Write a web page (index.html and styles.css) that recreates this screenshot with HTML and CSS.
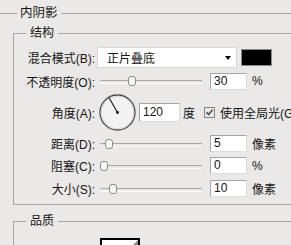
FILE: index.html
```html
<!DOCTYPE html>
<html>
<head>
<meta charset="utf-8">
<link rel="stylesheet" href="styles.css">
</head>
<body>
<fieldset class="outer">
  <legend class="outer-legend">内阴影</legend>
  <fieldset class="group structure">
    <legend class="group-legend">结构</legend>
    <div class="row r1">
      <span class="label">混合模式(B):</span>
      <div class="select"><span class="select-text">正片叠底</span><span class="arrow"></span></div>
      <div class="swatch"></div>
    </div>
    <div class="row r2">
      <span class="label">不透明度(O):</span>
      <div class="slider"><span class="thumb" style="left:28px"></span></div>
      <div class="field">30</div><span class="unit">%</span>
    </div>
    <div class="row r3">
      <span class="label">角度(A):</span>
      <div class="dial">
        <svg width="37" height="37" viewBox="0 0 37 37">
          <circle cx="18.5" cy="18.5" r="17.5" fill="#f3f3f3" stroke="#4a4a4a" stroke-width="1.3"/>
          <circle cx="18.5" cy="18.5" r="16.3" fill="none" stroke="#d6d6d6" stroke-width="1"/>
          <line x1="18.5" y1="18.5" x2="10.3" y2="4.3" stroke="#111" stroke-width="1.1"/>
          <circle cx="18.5" cy="18.5" r="1.4" fill="#111"/>
        </svg>
      </div>
      <div class="field wide">120</div><span class="unit deg">度</span>
      <span class="check">
        <svg width="9" height="9" viewBox="0 0 9 9"><path d="M1.5 4.2 L3.6 6.5 L7.6 1.8" fill="none" stroke="#4c4c54" stroke-width="1.6"/></svg>
      </span>
      <span class="check-label">使用全局光(G)</span>
    </div>
    <div class="row r4">
      <span class="label">距离(D):</span>
      <div class="slider"><span class="thumb" style="left:5px"></span></div>
      <div class="field">5</div><span class="unit">像素</span>
    </div>
    <div class="row r5">
      <span class="label">阻塞(C):</span>
      <div class="slider"><span class="thumb" style="left:0px"></span></div>
      <div class="field">0</div><span class="unit">%</span>
    </div>
    <div class="row r6">
      <span class="label">大小(S):</span>
      <div class="slider"><span class="thumb" style="left:9px"></span></div>
      <div class="field">10</div><span class="unit">像素</span>
    </div>
  </fieldset>
  <fieldset class="group quality">
    <legend class="group-legend">品质</legend>
    <div class="row q1">
      <span class="label low">等高线:</span>
      <div class="contour">
        <svg width="36" height="36" viewBox="0 0 36 36"><polygon points="0,36 36,0 36,36" fill="#8c8c8c"/></svg>
      </div>
      <span class="check low2"></span>
      <span class="check-label low">消除锯齿(L)</span>
    </div>
  </fieldset>
</fieldset>
</body>
</html>
```

FILE: styles.css
```css
* { box-sizing: border-box; }
html, body { margin: 0; padding: 0; }
body {
  background: #ebe9e8;
  width: 291px;
  height: 245px;
  overflow: hidden;
  font-family: "Liberation Sans", "Noto Sans CJK SC", sans-serif;
  font-size: 12px;
  color: #141414;
}
fieldset { margin: 0; min-width: 0; }
legend { line-height: 16px; height: 16px; }

.outer {
  margin: 5px 0 0 -2px;
  width: 340px;
  border: 1px solid #a8a6a4;
  padding: 0 0 0 14px;
}
.outer-legend {
  margin-left: 4px;
  padding: 0 3px;
  font-size: 12.5px;
}
.group {
  width: 320px;
  border: 1px solid #a8a6a4;
  padding: 4px 0 4px 0;
}
.structure { margin-top: 4px; }
.group-legend {
  margin-left: 12px;
  padding: 0 4px;
}

.row { display: flex; align-items: center; }
.r1 { height: 25px; }
.r2 { height: 22px; }
.r3 { height: 41px; }
.r4 { height: 21px; }
.r5 { height: 23px; }
.r6 { height: 23px; }

.label {
  flex: none;
  width: 81px;
  text-align: right;
  white-space: nowrap;
}

.select {
  flex: none;
  margin-left: 2px;
  width: 140px;
  height: 21px;
  background: #fff;
  border: 1px solid #dad8d6;
  display: flex;
  align-items: center;
  padding-left: 9px;
}
.select-text { flex: 1; }
.arrow {
  width: 0;
  height: 0;
  border-left: 3.5px solid transparent;
  border-right: 3.5px solid transparent;
  border-top: 4px solid #000;
  margin-right: 5px;
}
.swatch {
  flex: none;
  margin-left: 4px;
  width: 31px;
  height: 17px;
  background: #000;
  border: 1px solid #8a8a8a;
}

.slider {
  flex: none;
  position: relative;
  margin-left: 5px;
  width: 102px;
  height: 10px;
}
.slider::before {
  content: "";
  position: absolute;
  left: 0;
  right: 0;
  top: 4px;
  height: 2px;
  border-top: 1px solid #a7a7a7;
  border-bottom: 1px solid #fafafa;
}
.thumb {
  position: absolute;
  top: 0;
  width: 8px;
  height: 10px;
  border: 1px solid #8b8b8b;
  border-radius: 3px;
  background: #f6f6f6;
}

.field {
  flex: none;
  margin-left: 8px;
  width: 37px;
  height: 17px;
  background: #fff;
  border: 1px solid;
  border-color: #a5a5a5 #dcdcdc #dcdcdc #a5a5a5;
  padding-left: 3px;
  line-height: 15px;
}
.field.wide {
  margin-left: 3px;
  width: 41px;
  height: 19px;
  line-height: 17px;
}
.unit { margin-left: 5px; white-space: nowrap; }
.unit.deg { margin-left: 3px; }

.dial {
  flex: none;
  margin-left: 4px;
  width: 37px;
  height: 37px;
}
.dial svg { display: block; }

.check {
  flex: none;
  margin-left: 9px;
  width: 11px;
  height: 11px;
  border: 1px solid #858585;
  background: #e9e9e9;
  display: flex;
  align-items: center;
  justify-content: center;
}
.check-label { margin-left: 5px; white-space: nowrap; }

.quality { margin-top: 8px; padding-top: 9px; height: 80px; }
.q1 { align-items: flex-start; }
.low { margin-top: 5px; }
.contour {
  flex: none;
  margin-left: 5px;
  width: 40px;
  height: 40px;
  border: 2px solid #000;
  background: #fff;
}
.contour svg { display: block; }
.check.low2 { margin-left: 12px; margin-top: 7px; }
```
